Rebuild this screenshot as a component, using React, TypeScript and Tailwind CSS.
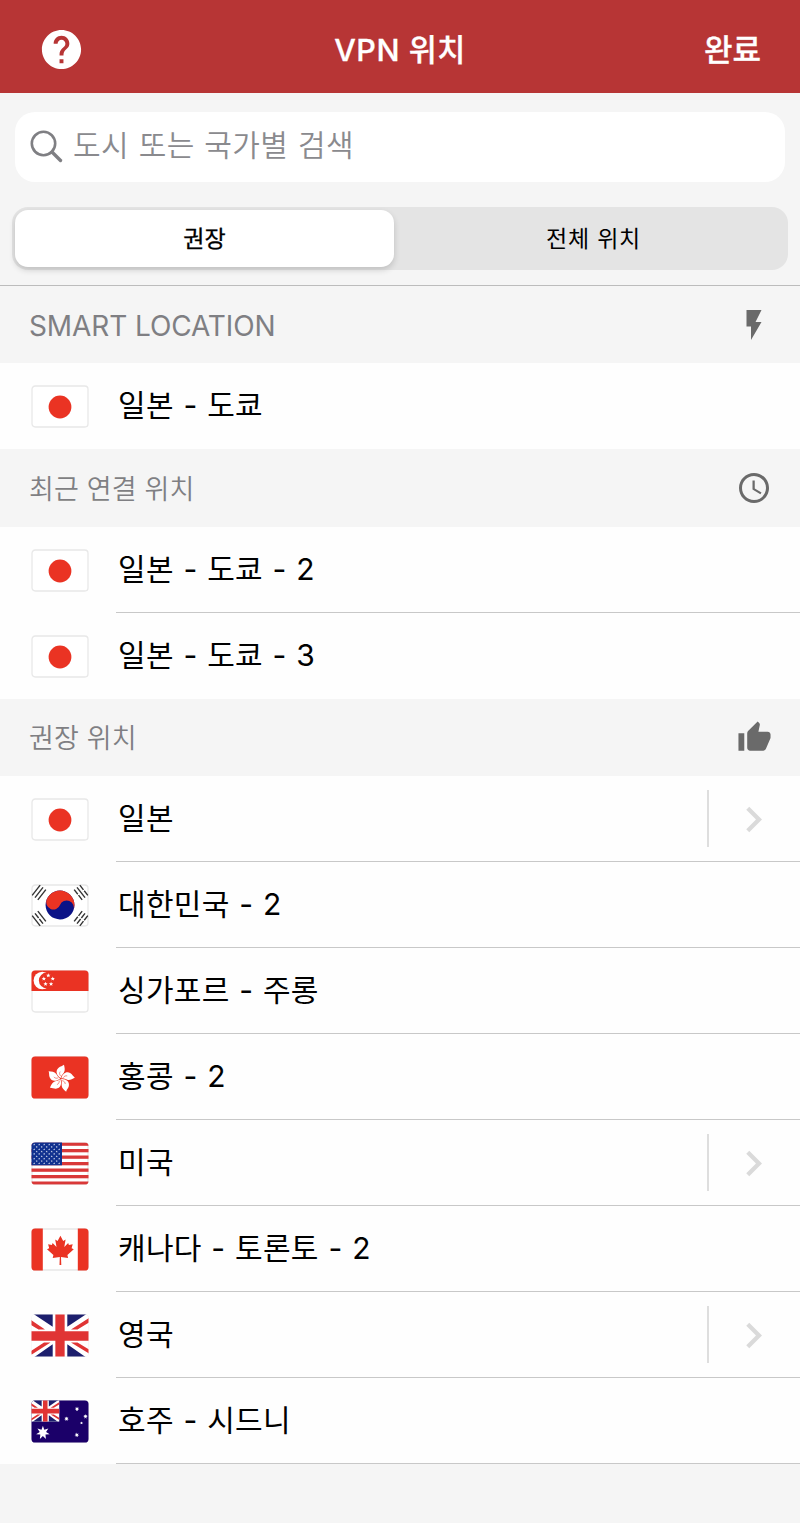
import type { ReactNode } from "react";
import { MdAccessTime, MdChevronRight, MdFlashOn, MdHelp, MdThumbUp } from "react-icons/md";

const STAR5 = "M0-1L.26-.36.95-.31.42.14.59.81 0 .44-.59.81-.42.14-.95-.31-.26-.36Z";
const STAR7 =
  "M0-1L.2-.42.78-.62.45-.1.97.22.37.25.43.9 0 .45-.43.9-.37.25-.97.22-.45-.1-.78-.62-.2-.42Z";
const LEAF =
  "M0-14.5L2.8-9.4 5.2-10.7 3.9-3.4 7.8-7.2 8.5-5.3 12.3-6 11.2-2 13.4-1 7 4.6 7.7 7.6.6 6.6.9 14.6H-.9L-.6 6.6-7.7 7.6-7 4.6-13.4-1-11.2-2-12.3-6-8.5-5.3-7.8-7.2-3.9-3.4-5.2-10.7-2.8-9.4Z";

function Flag({ id, children }: { id: string; children: ReactNode }) {
  return (
    <svg viewBox="0 0 58 43" className="h-[43px] w-[58px] shrink-0 overflow-hidden">
      <clipPath id={id}>
        <rect x="0.5" y="0.5" width="57" height="42" rx="3.6" />
      </clipPath>
      <rect x="1" y="1" width="56" height="41" rx="3.2" fill="#fff" stroke="#e8e8e8" strokeWidth="1.3" />
      <g clipPath={`url(#${id})`}>{children}</g>
    </svg>
  );
}

function Japan() {
  return (
    <Flag id="jp">
      <circle cx="29" cy="22" r="11.4" fill="#ea3323" />
    </Flag>
  );
}

function Trigram({ x, y, angle, broken }: { x: number; y: number; angle: number; broken: boolean[] }) {
  return (
    <g transform={`translate(${x} ${y}) rotate(${angle})`} stroke="#333" strokeWidth="1.4">
      {broken.map((b, i) => (
        <path key={i} d={b ? "M-6.5 0H-.6M.6 0H6.5" : "M-6.5 0H6.5"} transform={`translate(0 ${(i - 1) * 3.6})`} />
      ))}
    </g>
  );
}

function Korea() {
  return (
    <Flag id="kr">
      <g transform="translate(29 21) rotate(22)">
        <circle r="14.4" fill="#0b1287" />
        <path d="M-14.4 0A14.4 14.4 0 0 1 14.4 0A7.2 7.2 0 0 0 0 0A7.2 7.2 0 0 1-14.4 0Z" fill="#ea3323" />
      </g>
      <Trigram x={8} y={8.5} angle={-52} broken={[false, false, false]} />
      <Trigram x={50} y={8.5} angle={52} broken={[true, false, true]} />
      <Trigram x={8} y={34.5} angle={52} broken={[false, true, false]} />
      <Trigram x={50} y={34.5} angle={-52} broken={[true, true, true]} />
    </Flag>
  );
}

function Singapore() {
  return (
    <Flag id="sg">
      <rect width="58" height="21" fill="#ea3323" />
      <circle cx="11.3" cy="10.5" r="8.7" fill="#fff" />
      <circle cx="15.8" cy="10.5" r="7.9" fill="#ea3323" />
      {[0, 72, 144, 216, 288].map((a) => (
        <path
          key={a}
          d={STAR5}
          fill="#fff"
          transform={`translate(17.3 10.2) rotate(${a}) translate(0 -4.7) rotate(${-a}) scale(2.3)`}
        />
      ))}
    </Flag>
  );
}

function HongKong() {
  return (
    <Flag id="hk">
      <rect width="58" height="43" fill="#ea3323" />
      <g transform="translate(29.7 22.6)">
        {[0, 72, 144, 216, 288].map((a) => (
          <g key={a} transform={`rotate(${a + 4})`}>
            <path
              d="M0-.6C-4.5-3-6.2-7.5-2.8-10.8C-1.2-12.3 1-12.6 2.3-14C3.3-11 4-8.5 2.7-6.1C1.8-4.3.1-3.2 0-.6Z"
              fill="#fff"
            />
            <path d="M-.2-2.5C-1.6-4-1.8-5.4-1-7" fill="none" stroke="#ea3323" strokeWidth=".5" />
          </g>
        ))}
      </g>
    </Flag>
  );
}

function UnitedStates() {
  return (
    <Flag id="us">
      {[0, 1, 2, 3, 4, 5, 6].map((i) => (
        <rect key={i} y={0.5 + i * 6.5} width="58" height="3.3" fill="#d93838" />
      ))}
      <rect width="31" height="23.3" fill="#11318f" />
      {[0, 1, 2, 3, 4, 5, 6, 7, 8].map((r) =>
        [0, 1, 2, 3, 4, 5].map((c) =>
          r % 2 === 1 && c === 5 ? null : (
            <path
              key={`${r}-${c}`}
              d={STAR5}
              fill="#e3e8f5"
              transform={`translate(${3.2 + c * 5 + (r % 2) * 2.5} ${2.6 + r * 2.35}) scale(1.05)`}
            />
          )
        )
      )}
    </Flag>
  );
}

function Canada() {
  return (
    <Flag id="ca">
      <rect width="11.8" height="43" fill="#ea3323" />
      <rect x="46.8" width="12" height="43" fill="#ea3323" />
      <path d={LEAF} fill="#ea3323" transform="translate(29.4 22.3)" />
    </Flag>
  );
}

function UnionJack() {
  return (
    <>
      <rect width="58" height="43" fill="#fff" />
      <path
        d="M2.5 0H21.7V12.7ZM55.5 0H36.3V12.7ZM3.5 43H21.7V30.3ZM54.5 43H36.3V30.3Z"
        fill="#1d1f6d"
      />
      <path
        d="M0 6L14 15.5H7.5L0 11ZM40 15.5L58 4V8.5L46.5 15.5ZM0 37L13 28.5H19.5L0 41ZM40 28.5H46.5L58 35.5V39.5Z"
        fill="#e03434"
      />
      <path d="M29 0V43M0 22H58" stroke="#e03434" strokeWidth="9.3" />
    </>
  );
}

function UnitedKingdom() {
  return (
    <Flag id="gb">
      <UnionJack />
    </Flag>
  );
}

function Australia() {
  const stars = [
    [46, 9, 2.4],
    [35.5, 18.8, 2.4],
    [54.5, 16.5, 2.4],
    [50.5, 23, 1.5],
    [45.8, 35, 2.4],
  ];
  return (
    <Flag id="au">
      <rect width="58" height="43" fill="#1b0069" />
      <svg width="28.5" height="21.8" viewBox="0 0 58 43" preserveAspectRatio="none">
        <UnionJack />
      </svg>
      {stars.map(([x, y, s]) => (
        <path key={x} d={STAR7} fill="#fff" transform={`translate(${x} ${y}) scale(${s})`} />
      ))}
      <path d={STAR7} fill="#fff" transform="translate(11.9 32.8) scale(7)" />
    </Flag>
  );
}

function SectionHeader({ title, icon, className }: { title: string; icon: ReactNode; className: string }) {
  return (
    <div className="flex items-center justify-between bg-[#f5f5f5] pl-[29px] pr-7 text-[#7f7f83]">
      <h2 className={`flex items-center ${className}`}>{title}</h2>
      <span className="flex w-9 justify-center text-[#6a6a6a]">{icon}</span>
    </div>
  );
}

function LocationRow({ flag, name, line = true, more = false }: { flag: ReactNode; name: string; line?: boolean; more?: boolean }) {
  return (
    <div className="flex h-[86px] pl-[31px]">
      <div className="flex pt-[22px]">{flag}</div>
      <div className={`ml-[27px] flex flex-1 items-center border-b pl-0.5 ${line ? "border-[#c8c8c8]" : "border-transparent"}`}>
        <span className="flex-1 pb-0.5 text-[30px] leading-[44px] tracking-[0.3px] text-black [word-spacing:0.9px]">{name}</span>
        {more && (
          <div className="flex h-[57px] w-[93px] items-center border-l-2 border-[#dedede] pl-[19px] pt-px">
            <MdChevronRight size={51} color="#dadada" />
          </div>
        )}
      </div>
    </div>
  );
}

export default function App() {
  return (
    <div className="flex h-[1523px] w-[800px] flex-col bg-[#f5f5f5] font-['Inter','Noto_Sans_CJK_KR',sans-serif]">
      <header className="grid h-[93px] grid-cols-[1fr_auto_1fr] items-center bg-[#b73535] pt-1.5 text-white">
        <MdHelp size={47} className="-mt-px ml-[38px]" />
        <h1 className="text-[30.5px] font-medium leading-[44px] tracking-[0.5px] [-webkit-text-stroke:0.3px_white]">VPN 위치</h1>
        <button className="mr-[39px] justify-self-end text-[31px] font-medium leading-[44px] [-webkit-text-stroke:0.3px_white]">완료</button>
      </header>
      <div className="px-[15px] pt-[19px]">
        <div className="flex h-[70px] items-center rounded-[20px] bg-white pl-[15px] text-[#8a8a8e]">
          <svg viewBox="0 0 34 34" className="size-[34px] shrink-0" fill="none" stroke="#7f7f83" strokeLinecap="round">
            <circle cx="13.5" cy="13.5" r="11.7" strokeWidth="2.6" />
            <path d="M22 22L30.5 30.5" strokeWidth="3.4" />
          </svg>
          <span className="ml-[9px] pb-1 text-[30px] font-[350] leading-[44px] tracking-[0.4px] [word-spacing:0.8px]">도시 또는 국가별 검색</span>
        </div>
      </div>
      <div className="mx-3 mt-[25px] flex h-[63px] shrink-0 rounded-2xl bg-[#e4e4e4] p-[3px] text-[23px] leading-8 text-black">
        <button className="h-[57px] w-[379px] rounded-[13px] bg-white shadow-[0_3px_6px_rgba(0,0,0,0.16)] [-webkit-text-stroke:0.3px_black]">권장</button>
        <button className="h-[57px] flex-1 pl-2 tracking-[0.8px]">전체 위치</button>
      </div>
      <div className="mt-[15px] h-px shrink-0 bg-[#bcbcbc]" />
      <main className="flex flex-col">
        <SectionHeader
          title="SMART LOCATION"
          icon={<MdFlashOn size={36} />}
          className="h-[77px] pt-0.5 text-[28px] font-normal tracking-[-0.1px]"
        />
        <div className="bg-[#fefefe]">
          <LocationRow flag={<Japan />} name="일본 - 도쿄" line={false} />
        </div>
        <SectionHeader
          title="최근 연결 위치"
          icon={<MdAccessTime size={36} />}
          className="h-[78px] pt-1 text-[27px] font-[350] tracking-[0.15px]"
        />
        <div className="bg-[#fefefe]">
          <LocationRow flag={<Japan />} name="일본 - 도쿄 - 2" />
          <LocationRow flag={<Japan />} name="일본 - 도쿄 - 3" line={false} />
        </div>
        <SectionHeader
          title="권장 위치"
          icon={<MdThumbUp size={35} />}
          className="h-[77px] pt-1 text-[27px] font-[350] tracking-[0.15px]"
        />
        <div className="bg-[#fefefe]">
          <LocationRow flag={<Japan />} name="일본" more />
          <LocationRow flag={<Korea />} name="대한민국 - 2" />
          <LocationRow flag={<Singapore />} name="싱가포르 - 주롱" />
          <LocationRow flag={<HongKong />} name="홍콩 - 2" />
          <LocationRow flag={<UnitedStates />} name="미국" more />
          <LocationRow flag={<Canada />} name="캐나다 - 토론토 - 2" />
          <LocationRow flag={<UnitedKingdom />} name="영국" more />
          <LocationRow flag={<Australia />} name="호주 - 시드니" />
        </div>
      </main>
    </div>
  );
}
